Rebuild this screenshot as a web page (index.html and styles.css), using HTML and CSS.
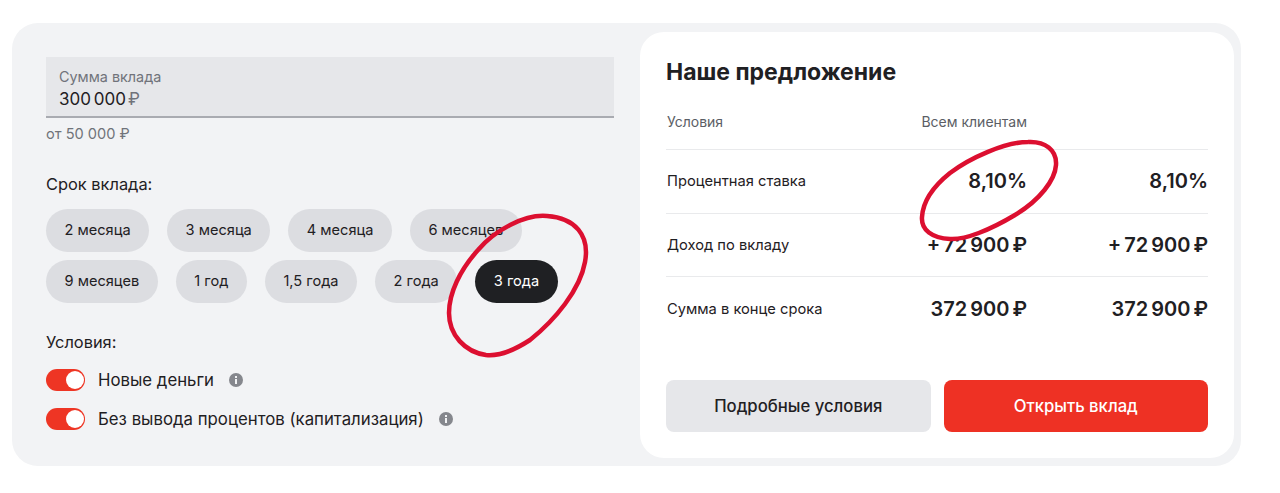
FILE: index.html
```html
<!DOCTYPE html>
<html lang="ru">
<head>
  <meta charset="UTF-8" />
  <title>Вклад</title>
  <link rel="stylesheet" href="styles.css">
</head>
<body>

  <div class="deposit">
    <div class="form">
      <div class="amount">
        <div class="amount-label">Сумма вклада</div>
        <div class="amount-value">300 000<span class="currency">₽</span></div>
      </div>
      <div class="hint">от 50 000 ₽</div>

      <div class="section-title">Срок вклада:</div>
      <div class="chips">
        <div class="chip">2 месяца</div>
        <div class="chip">3 месяца</div>
        <div class="chip">4 месяца</div>
        <div class="chip">6 месяцев</div>
        <div class="chip">9 месяцев</div>
        <div class="chip">1 год</div>
        <div class="chip">1,5 года</div>
        <div class="chip">2 года</div>
        <div class="chip active">3 года</div>
      </div>

      <div class="section-title conditions">Условия:</div>
      <div class="option">
        <span class="toggle"></span>
        <span>Новые деньги</span>
        <svg class="info" viewBox="0 0 14 14"><circle cx="7" cy="7" r="7" fill="#85878d"/><rect x="6" y="6" width="2" height="5" fill="#f2f3f5"/><rect x="6" y="3" width="2" height="2" fill="#f2f3f5"/></svg>
      </div>
      <div class="option">
        <span class="toggle"></span>
        <span>Без вывода процентов (капитализация)</span>
        <svg class="info" viewBox="0 0 14 14"><circle cx="7" cy="7" r="7" fill="#85878d"/><rect x="6" y="6" width="2" height="5" fill="#f2f3f5"/><rect x="6" y="3" width="2" height="2" fill="#f2f3f5"/></svg>
      </div>
    </div>

    <div class="offer">
      <h2>Наше предложение</h2>
      <div class="row head">
        <div>Условия</div>
        <div class="cell">Всем клиентам</div>
        <div class="cell"></div>
      </div>
      <div class="row">
        <div>Процентная ставка</div>
        <div class="cell num">8,10%</div>
        <div class="cell num">8,10%</div>
      </div>
      <div class="row">
        <div>Доход по вкладу</div>
        <div class="cell num">+ 72 900 ₽</div>
        <div class="cell num">+ 72 900 ₽</div>
      </div>
      <div class="row">
        <div>Сумма в конце срока</div>
        <div class="cell num">372 900 ₽</div>
        <div class="cell num">372 900 ₽</div>
      </div>
      <div class="buttons">
        <button class="btn-details">Подробные условия</button>
        <button class="btn-open">Открыть вклад</button>
      </div>
    </div>
  </div>

  <!-- hand-drawn red marks over the page -->
  <svg class="marks" viewBox="0 0 1280 493">
    <path d="M478 250 C495 230 525 214 547 216 C575 218 590 235 585 262 C580 290 555 320 530 340 C510 353 495 356 486 355 C465 352 449 335 449 313 C449 293 460 270 478 250" />
    <path d="M1028 142 C1045 141 1057 150 1056 165 C1055 180 1040 200 1015 215 C990 230 965 240 950 239 C932 238 921 230 922 217 C923 200 935 185 950 173 C970 158 1005 142 1028 142" />
  </svg>

</body>
</html>
```

FILE: styles.css
```css
* {
  box-sizing: border-box;
  font-family: 'Inter', sans-serif;
}

body {
  margin: 0;
  background-color: white;
  color: #1f2023;
}

.deposit {
  display: flex;
  width: 1229px;
  height: 443px;
  margin: 23px 0 0 12px;
  padding: 9px 7px 8px 34px;
  background-color: #f2f3f5;
  border-radius: 26px;
}

.form {
  width: 568px;
  margin-right: 26px;
  padding-top: 25px;
}

.amount {
  height: 61px;
  padding: 11px 13px 0;
  background-color: #e6e7ea;
  border-bottom: 2px solid #a9abb1;
}

.amount-label {
  font-size: 14.4px;
  line-height: 17px;
  color: #70737a;
}

.amount-value {
  font-size: 17px;
  line-height: 24px;
  margin-top: 2px;
  word-spacing: -2px;
}

.currency {
  margin-left: 2px;
  color: #70737a;
}

.hint {
  margin-top: 8px;
  font-size: 14.6px;
  line-height: 17px;
  color: #70737a;
}

.section-title {
  margin-top: 31px;
  font-size: 16.4px;
  line-height: 20px;
}

.chips {
  display: flex;
  flex-wrap: wrap;
  gap: 8px 18px;
  margin-top: 15px;
  width: 540px;
}

.chip {
  height: 43px;
  padding: 0 18.5px;
  border-radius: 22px;
  background-color: #dcdde1;
  font-size: 14.6px;
  line-height: 43px;
}

.chip.active {
  background-color: #1f2023;
  color: white;
}

.section-title.conditions {
  margin-top: 29px;
}

.option {
  display: flex;
  align-items: center;
  height: 22px;
  margin-top: 17px;
  font-size: 16.8px;
}

.toggle {
  position: relative;
  width: 39px;
  height: 22px;
  margin-right: 13px;
  border-radius: 11px;
  background-color: #ee3524;
}

.toggle::after {
  content: "";
  position: absolute;
  top: 2px;
  right: 1px;
  width: 18px;
  height: 18px;
  border-radius: 50%;
  background-color: white;
}

.info {
  width: 14px;
  height: 14px;
  margin-left: 15px;
}

.offer {
  flex: 1;
  padding: 26px 26px 26px;
  background-color: white;
  border-radius: 24px;
}

h2 {
  margin: 0 0 14px;
  font-size: 23px;
  line-height: 28px;
  font-weight: 700;
}

.row {
  display: grid;
  grid-template-columns: 1fr 200px 181px;
  align-items: center;
  height: 63.5px;
  padding-left: 1px;
  border-bottom: 1px solid #e9eaec;
  font-size: 14.7px;
}

.row:nth-last-child(2) {
  border-bottom: none;
}

.row.head {
  height: 50px;
  padding-bottom: 6px;
  color: #5b5e65;
  font-size: 14px;
}

.cell {
  text-align: right;
}

.num {
  font-size: 20px;
  font-weight: 600;
  word-spacing: -2px;
}

.buttons {
  display: flex;
  gap: 13px;
  margin-top: 39px;
}

button {
  flex: 1;
  height: 52px;
  border: none;
  border-radius: 8px;
  font-size: 16.7px;
  font-weight: 500;
  cursor: pointer;
}

.btn-details {
  background-color: #e6e7ea;
  color: #1f2023;
}

.btn-open {
  background-color: #ee3124;
  color: white;
}

.marks {
  position: absolute;
  top: 0;
  left: 0;
  width: 1280px;
  height: 493px;
  pointer-events: none;
}

.marks path {
  fill: none;
  stroke: #dc0f30;
  stroke-width: 4.5;
}
```
